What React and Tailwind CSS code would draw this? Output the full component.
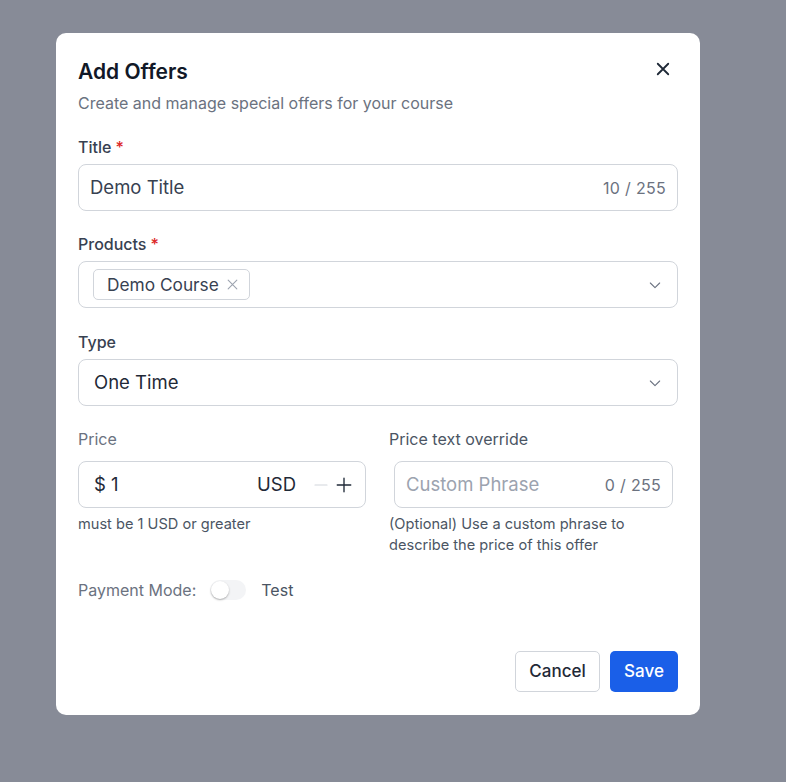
import React from "react";

const Chevron = () => (
  <svg width="16" height="16" viewBox="0 0 24 24" fill="none" stroke="#6b7280" strokeWidth="1.6" strokeLinecap="round" strokeLinejoin="round">
    <path d="M5 9l7 7 7-7" />
  </svg>
);

const Label = ({ children, required, className = "" }) => (
  <div className={`text-[16px] leading-[20px] font-medium text-[#374151] ${className}`}>
    {children}
    {required && <span className="text-[#dc2626] ml-1">*</span>}
  </div>
);

export default function App() {
  return (
    <div
      className="min-h-screen bg-[#878b97] pt-[33px] pl-[56px]"
      style={{ fontFamily: "Inter, 'Liberation Sans', sans-serif" }}
    >
      <div className="w-[644px] h-[682px] rounded-[10px] bg-white px-[22px] pt-[25px] pb-[23px] flex flex-col">
        <div className="flex items-start justify-between">
          <h2 className="text-[21px] leading-[28px] font-semibold text-[#111827]">Add Offers</h2>
          <button className="mt-[2px] mr-[6px] text-[#1f2937]">
            <svg width="18" height="18" viewBox="0 0 24 24" fill="none" stroke="currentColor" strokeWidth="2.4" strokeLinecap="round">
              <path d="M5 5l14 14M19 5L5 19" />
            </svg>
          </button>
        </div>
        <p className="mt-[6px] text-[16px] leading-[22px] text-[#6b7280]">
          Create and manage special offers for your course
        </p>

        <Label required className="mt-[23px]">Title</Label>
        <div className="mt-[7px] h-[47px] rounded-[8px] border border-[#d1d5db] flex items-center justify-between pl-[11px] pr-[11px]">
          <span className="text-[18.5px] text-[#374151]">Demo Title</span>
          <span className="text-[16px] tracking-[0.3px] text-[#6b7280]">10 / 255</span>
        </div>

        <Label required className="mt-[23px]">Products</Label>
        <div className="mt-[7px] h-[47px] rounded-[8px] border border-[#d1d5db] flex items-center justify-between pl-[14px] pr-[14px]">
          <span className="h-[31px] rounded-[5px] border border-[#d1d5db] flex items-center gap-[7px] pl-[13px] pr-[10px] text-[17.3px] text-[#374151]">
            Demo Course
            <svg width="13" height="13" viewBox="0 0 24 24" fill="none" stroke="#9ca3af" strokeWidth="2" strokeLinecap="round">
              <path d="M4 4l16 16M20 4L4 20" />
            </svg>
          </span>
          <Chevron />
        </div>

        <Label className="mt-[24px]">Type</Label>
        <div className="mt-[7px] h-[47px] rounded-[8px] border border-[#d1d5db] flex items-center justify-between pl-[15px] pr-[14px]">
          <span className="text-[18.5px] text-[#1f2937]">One Time</span>
          <Chevron />
        </div>

        <div className="mt-[23px] grid grid-cols-[288px_1fr] gap-[23px]">
          <div>
            <div className="text-[16px] leading-[20px] text-[#6b7280]">Price</div>
            <div className="mt-[12px] h-[47px] rounded-[8px] border border-[#d1d5db] flex items-center pl-[15px] pr-[12px] text-[18.5px] text-[#1f2937]">
              <span className="flex-1">$ 1</span>
              <span className="mr-[17px]">USD</span>
              <svg width="16" height="16" viewBox="0 0 24 24" fill="none" stroke="#d1d5db" strokeWidth="1.8" strokeLinecap="round">
                <path d="M3 12h18" />
              </svg>
              <svg className="ml-[6px]" width="18" height="18" viewBox="0 0 24 24" fill="none" stroke="#1f2937" strokeWidth="1.8" strokeLinecap="round">
                <path d="M3 12h18M12 3v18" />
              </svg>
            </div>
            <p className="mt-[6px] text-[14.6px] leading-[21px] text-[#4b5563]">must be 1 USD or greater</p>
          </div>
          <div>
            <div className="text-[16px] leading-[20px] text-[#4b5563]">Price text override</div>
            <div className="mt-[12px] ml-[5px] mr-[5px] h-[47px] rounded-[8px] border border-[#d1d5db] flex items-center justify-between pl-[11px] pr-[11px]">
              <span className="text-[18.5px] text-[#9ca3af]">Custom Phrase</span>
              <span className="text-[16px] tracking-[0.3px] text-[#6b7280]">0 / 255</span>
            </div>
            <p className="mt-[6px] text-[14.6px] leading-[21px] text-[#4b5563]">
              (Optional) Use a custom phrase to
              <br />
              describe the price of this offer
            </p>
          </div>
        </div>

        <div className="mt-[22px] flex items-center text-[16px] text-[#6b7280]">
          <span>Payment Mode:</span>
          <span className="ml-[14px] w-[36px] h-[20px] rounded-full bg-[#f3f4f6] flex items-center px-[1px]">
            <span className="w-[18px] h-[18px] rounded-full bg-white shadow-[0_1px_2px_rgba(0,0,0,0.3)]" />
          </span>
          <span className="ml-[15px] text-[#4b5563]">Test</span>
        </div>

        <div className="mt-auto flex justify-end gap-[10px]">
          <button className="h-[41px] w-[85px] rounded-[5px] border border-[#d1d5db] bg-white text-[17px] font-medium text-[#1f2937]">
            Cancel
          </button>
          <button className="h-[41px] w-[68px] rounded-[5px] bg-[#1a5fe8] text-[17px] font-medium text-white">
            Save
          </button>
        </div>
      </div>
    </div>
  );
}
